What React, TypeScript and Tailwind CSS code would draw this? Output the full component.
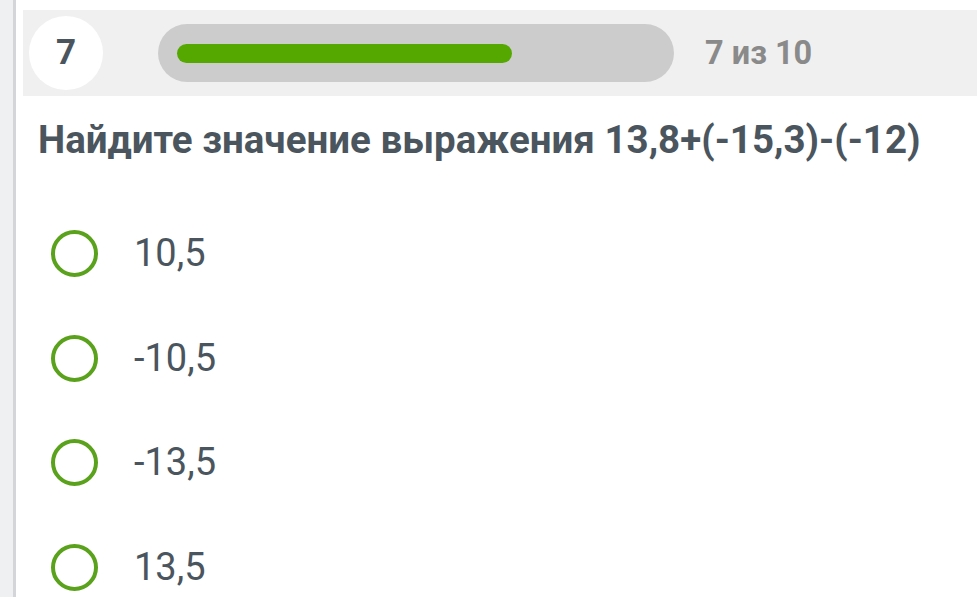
const OPTIONS = ['10,5', '-10,5', '-13,5', '13,5']

function Radio() {
  return (
    <span className="box-border block h-[47px] w-[47px] shrink-0 rounded-full border-[4px] border-[#5aa21c]" />
  )
}

export default function App() {
  const current = 7
  const total = 10
  const progress = 0.7

  return (
    <div className="flex h-[597px] w-[977px] overflow-hidden bg-white font-['Roboto',sans-serif]">
      {/* side rail */}
      <div className="h-full w-[13px] shrink-0 bg-[#eef0f2]" />
      <div className="h-full w-[3px] shrink-0 bg-[#d3d5d8]" />

      <div className="flex min-w-0 flex-1 flex-col">
        {/* header: question number + progress */}
        <div className="ml-[7px] mt-[10px] flex h-[86px] items-center bg-[#f0f0f0] pl-[6px]">
          <div className="flex h-[74px] w-[74px] items-center justify-center rounded-full bg-white text-[35px] font-bold text-[#4a555e]">
            {current}
          </div>
          <div className="ml-[55px] flex h-[58px] w-[516px] items-center rounded-full bg-[#cccccc] px-[19px]">
            <div className="h-[19px] rounded-full bg-[#55a800]" style={{ width: `${progress * 100}%` }} />
          </div>
          <div className="ml-[31px] text-[32.5px] font-bold text-[#8a8a8a]">
            {current} из {total}
          </div>
        </div>

        {/* question */}
        <h1 className="ml-[22px] mt-[20px] text-[38.5px] font-bold leading-[48px] text-[#4a555e]">
          Найдите значение выражения 13,8+(-15,3)-(-12)
        </h1>

        {/* answers */}
        <div className="mt-[66px] flex flex-col gap-[57.5px] pl-[35px]">
          {OPTIONS.map((o) => (
            <div key={o} className="flex h-[47px] items-center">
              <Radio />
              <span className="ml-[36px] text-[38px] text-[#4a555e]">{o}</span>
            </div>
          ))}
        </div>
      </div>
    </div>
  )
}
